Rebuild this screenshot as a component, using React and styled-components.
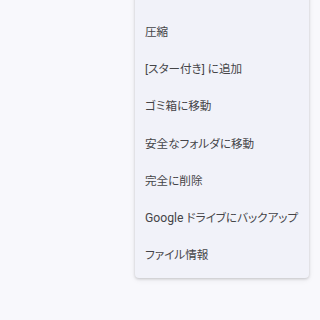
import React from 'react';
import styled, { createGlobalStyle } from 'styled-components';

const GlobalStyle = createGlobalStyle`
  html, body {
    margin: 0;
    padding: 0;
    background: #f8f8fc;
    font-family: Roboto, "Noto Sans CJK JP", "Noto Sans", sans-serif;
  }
`;

const Page = styled.div`
  width: 320px;
  height: 320px;
  overflow: hidden;
  display: flex;
  align-items: flex-start;
  padding-left: 135px;
  box-sizing: border-box;
`;

const Menu = styled.ul`
  list-style: none;
  margin: -10px 0 0 0;
  width: 174px;
  padding: 22px 0 5px 0;
  background: #f1f2f9;
  border-radius: 0 0 4px 4px;
  box-shadow: 0 1px 3px rgba(0, 0, 0, 0.18), 0 2px 6px rgba(0, 0, 0, 0.06);
`;

const Item = styled.li`
  height: 37.3px;
  display: flex;
  align-items: center;
  padding-left: 10px;
  font-size: 11.6px;
  color: #454548;
  white-space: pre;
  font-feature-settings: "palt";
`;

const Latin = styled.span`
  font-size: 12.2px;
`;

const items = [
  '圧縮',
  '[スター付き] に追加',
  'ゴミ箱に移動',
  '安全なフォルダに移動',
  '完全に削除',
  <span><Latin>Google</Latin> ドライブにバックアップ</span>,
  'ファイル情報',
];

export default function App() {
  return (
    <>
      <GlobalStyle />
      <Page>
        <Menu>
          {items.map((item, index) => (
            <Item key={index}>{item}</Item>
          ))}
        </Menu>
      </Page>
    </>
  );
}
